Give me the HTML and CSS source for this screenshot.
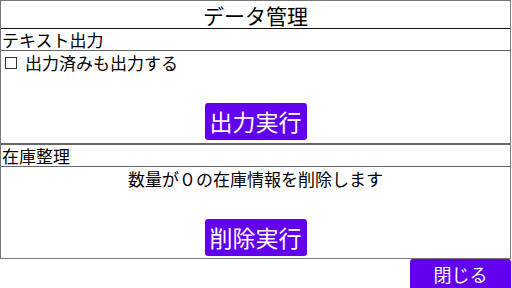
FILE: index.html
```html
<!DOCTYPE html>
<html lang="ja">
<head>
<meta charset="utf-8">
<link rel="stylesheet" href="styles.css">
</head>
<body>
<div class="frame">
  <div class="title">データ管理</div>
  <div class="sec-head">テキスト出力</div>
  <div class="sec-body sec1">
    <div class="check-row"><span class="box"></span><span>出力済みも出力する</span></div>
    <button class="btn">出力実行</button>
  </div>
  <div class="sec-head">在庫整理</div>
  <div class="sec-body sec2">
    <div class="desc">数量が０の在庫情報を削除します</div>
    <button class="btn">削除実行</button>
  </div>
</div>
<div class="footer">
  <button class="close">閉じる</button>
</div>
</body>
</html>
```
FILE: styles.css
```css
html, body {
  margin: 0;
  padding: 0;
  background: #fff;
}
body {
  width: 512px;
  height: 288px;
  overflow: hidden;
  font-family: "Noto Sans CJK JP", "Noto Sans", sans-serif;
  font-weight: 400;
  color: #000;
}
.frame {
  width: 511px;
  height: 259px;
  box-sizing: border-box;
  border: 1px solid #777;
  display: flex;
  flex-direction: column;
}
.title {
  height: 27px;
  border-bottom: 1px solid #111;
  text-align: center;
  font-size: 21px;
  line-height: 29px;
}
.sec-head {
  height: 21px;
  border-bottom: 1px solid #666;
  font-size: 17px;
  line-height: 21px;
  padding-left: 1px;
}
.sec-body {
  display: flex;
  flex-direction: column;
  align-items: center;
}
.sec1 {
  height: 92px;
  border-bottom: 2px solid #666;
  align-items: stretch;
}
.sec2 {
  height: 91px;
}
.check-row {
  display: flex;
  align-items: center;
  font-size: 17px;
  line-height: 24px;
  padding-left: 4px;
  gap: 8px;
}
.box {
  width: 10px;
  height: 10px;
  border: 1px solid #333;
}
.desc {
  font-size: 17px;
  line-height: 24px;
}
.btn {
  margin: auto auto 3px;
  width: 102px;
  height: 37px;
  border: none;
  border-radius: 3px;
  background: #6200ee;
  color: #fff;
  font-family: "Noto Sans CJK JP", "Noto Sans", sans-serif;
  font-weight: 400;
  font-size: 23px;
  padding: 0;
  line-height: 37px;
}
.sec2 .btn {
  margin-bottom: 2px;
}
.footer {
  display: flex;
  justify-content: flex-end;
  padding-right: 1px;
}
.close {
  width: 101px;
  height: 32px;
  border: none;
  border-radius: 3px;
  background: #6200ee;
  color: #fff;
  font-family: "Noto Sans CJK JP", "Noto Sans", sans-serif;
  font-weight: 400;
  font-size: 18px;
  padding: 0 0 3px;
}
```
